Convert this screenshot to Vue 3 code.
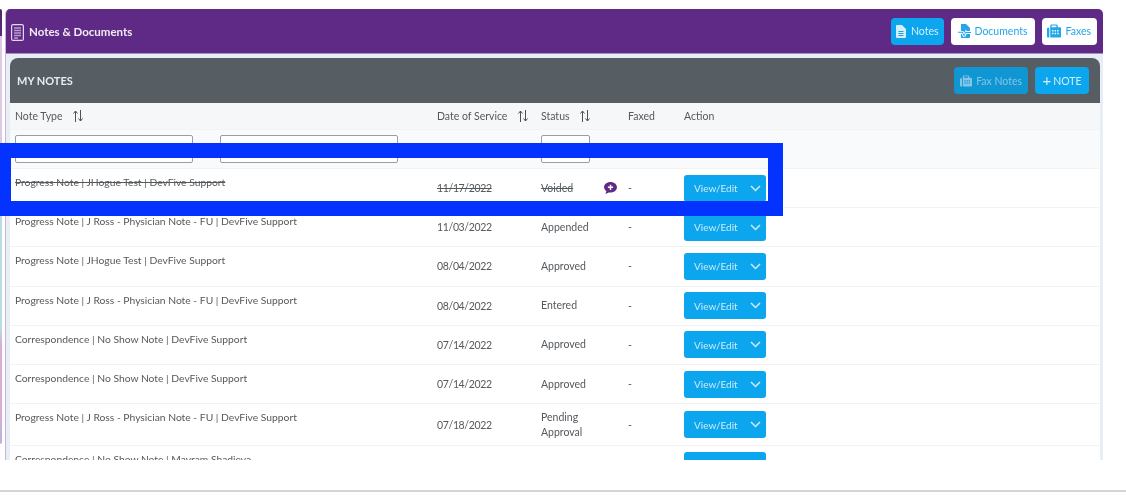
<template>
  <div class="page">
    <div class="sidebar"></div>
    <section class="panel">
      <header class="panel__head">
        <div class="panel__title">
          <svg class="doc" width="13" height="17" viewBox="0 0 13 17" fill="none" stroke="#e3d6ee" stroke-width="1.2">
            <rect x="0.6" y="0.6" width="11.8" height="15.8" rx="1.5" />
            <path d="M3 4h7M3 6.500h7M3 9h7M3 11.500h7M3 14h4" stroke="#b79ccd" stroke-width="1.300" />
          </svg>
          <span>Notes &amp; Documents</span>
        </div>
        <div class="tabs">
          <button class="tab tab--active">
            <svg width="10" height="13" viewBox="0 0 10 13"><path fill="currentColor" fill-rule="evenodd" d="M1 0h5l4 4v8a1 1 0 0 1-1 1H1a1 1 0 0 1-1-1V1a1 1 0 0 1 1-1zm1.500 6v1h5V6zm0 2v1h5V8zm0 2v1h5v-1z"/></svg>
            Notes
          </button>
          <button class="tab tab--docs">
            <svg width="13" height="14" viewBox="0 0 13 14"><path fill="currentColor" d="M3 0h5l4 4v3H8.500L7.800 5.500 6.200 9 5.300 7H3zM0 7.700h4.800l1.400 3 1.600-3.400.4.700H13v1H8l-.2-.2L6.200 13 4.300 8.700H0zM3 10h.7l1.500 3h2l1.400-3H12v3a1 1 0 0 1-1 1H4a1 1 0 0 1-1-1z"/></svg>
            Documents
          </button>
          <button class="tab">
            <svg width="14" height="14" viewBox="0 0 15 14"><path fill="currentColor" fill-rule="evenodd" d="M0 4.500a1 1 0 0 1 1-1h1.500V14H1a1 1 0 0 1-1-1zM3.500 3V1.500A1.500 1.500 0 0 1 5 0h5a1.500 1.500 0 0 1 1.500 1.500V3H14a1 1 0 0 1 1 1v9a1 1 0 0 1-1 1H3.500zm1.500 0h5V1.200H5zM5.500 6v1.500H7V6zm2.700 0v1.500h1.500V6zm2.700 0v1.500h1.500V6zM5.500 9v1.500H7V9zm2.700 0v1.500h1.500V9zm2.700 0v1.500h1.500V9z"/></svg>
            Faxes
          </button>
        </div>
      </header>

      <div class="panel__body">
        <div class="card">
          <div class="card__head">
            <h2>MY NOTES</h2>
            <div class="card__actions">
              <button class="action action--muted">
                <svg width="12" height="12" viewBox="0 0 15 14"><path fill="currentColor" fill-rule="evenodd" d="M0 4.500a1 1 0 0 1 1-1h1.500V14H1a1 1 0 0 1-1-1zM3.500 3V1.500A1.500 1.500 0 0 1 5 0h5a1.500 1.500 0 0 1 1.500 1.500V3H14a1 1 0 0 1 1 1v9a1 1 0 0 1-1 1H3.500zm1.500 0h5V1.200H5zM5.500 6v1.500H7V6zm2.700 0v1.500h1.500V6zm2.700 0v1.500h1.500V6zM5.500 9v1.500H7V9zm2.700 0v1.500h1.500V9zm2.700 0v1.500h1.500V9z"/></svg>
                Fax Notes
              </button>
              <button class="action action--add"><span class="plus">+</span>NOTE</button>
            </div>
          </div>

          <div class="row row--head">
            <div class="cell">Note Type <svg class="sort" width="12" height="12" viewBox="0 0 12 12" fill="none" stroke="currentColor"><path d="M3.500 12V1M1.500 3.500 3.500 1l2 2.500M8.500 0v11M6.500 8.500l2 2.500 2-2.500" /></svg></div>
            <div class="cell">Date of Service <svg class="sort" width="12" height="12" viewBox="0 0 12 12" fill="none" stroke="currentColor"><path d="M3.500 12V1M1.500 3.500 3.500 1l2 2.500M8.500 0v11M6.500 8.500l2 2.500 2-2.500" /></svg></div>
            <div class="cell">Status <svg class="sort" width="12" height="12" viewBox="0 0 12 12" fill="none" stroke="currentColor"><path d="M3.500 12V1M1.500 3.500 3.500 1l2 2.500M8.500 0v11M6.500 8.500l2 2.500 2-2.500" /></svg></div>
            <div class="cell">Faxed</div>
            <div class="cell">Action</div>
          </div>

          <div class="row row--filter">
            <div class="filters">
              <input class="filter" type="text" />
              <input class="filter" type="text" />
            </div>
            <div></div>
            <div><input class="filter filter--small" type="text" /></div>
          </div>

          <div v-for="(note, i) in notes" :key="i" class="row row--note" :class="{ 'row--voided': note.status === 'Voided', 'row--tall': note.tall }">
            <div class="cell cell--type">{{ note.type }}</div>
            <div class="cell cell--date">{{ note.date }}</div>
            <div class="cell cell--status">
              <span class="status">{{ note.status }}</span>
              <svg v-if="note.status === 'Voided'" class="bubble" width="13" height="12" viewBox="0 0 14 13">
                <path fill="#5f2a86" d="M7 0c3.900 0 7 2.500 7 5.800s-3.100 5.700-7 5.700c-.7 0-1.300 0-1.900-.2L1.500 13l1-3.100C1 8.900 0 7.400 0 5.800 0 2.500 3.100 0 7 0z" />
                <path stroke="#fff" stroke-width="1.600" d="M4.200 5.800h5.600M7 3v5.600" />
              </svg>
            </div>
            <div class="cell cell--faxed">{{ note.date ? '-' : '' }}</div>
            <div class="cell cell--action">
              <button class="view">
                <span>View/Edit</span>
                <svg width="11" height="7" viewBox="0 0 11 7" fill="none" stroke="currentColor" stroke-width="1.500"><path d="M1 1l4.500 4.500L10 1" /></svg>
              </button>
            </div>
          </div>
        </div>
      </div>
    </section>
    <div class="highlight"></div>
    <div class="rule"></div>
  </div>
</template>

<script setup>
const notes = [
  { type: 'Progress Note | JHogue Test | DevFive Support', date: '11/17/2022', status: 'Voided' },
  { type: 'Progress Note | J Ross - Physician Note - FU | DevFive Support', date: '11/03/2022', status: 'Appended' },
  { type: 'Progress Note | JHogue Test | DevFive Support', date: '08/04/2022', status: 'Approved' },
  { type: 'Progress Note | J Ross - Physician Note - FU | DevFive Support', date: '08/04/2022', status: 'Entered' },
  { type: 'Correspondence | No Show Note | DevFive Support', date: '07/14/2022', status: 'Approved' },
  { type: 'Correspondence | No Show Note | DevFive Support', date: '07/14/2022', status: 'Approved' },
  { type: 'Progress Note | J Ross - Physician Note - FU | DevFive Support', date: '07/18/2022', status: 'Pending Approval', tall: true },
  { type: 'Correspondence | No Show Note | Mayram Shadieva', date: '', status: '' }
]
</script>

<style>
html,
body {
  margin: 0;
  background: #fff;
  overflow: hidden;
}
</style>

<style scoped>
.page {
  position: relative;
  width: 1126px;
  height: 502px;
  overflow: hidden;
  background: #fff;
  font-family: Lato, "Open Sans", sans-serif;
  color: #54595d;
  display: flex;
  padding-top: 9px;
  box-sizing: border-box;
  gap: 3px;
  align-items: flex-start;
}

.sidebar {
  width: 2px;
  height: 435px;
  background: linear-gradient(#4a2b66 0, #5f2a86 27px, #dcc9e4 27px, #dcc9e4 190px, #b9dbe2 200px, #b9dbe2 320px, #d9aed6 335px, #d9aed6 410px, #c4b0e0 420px);
  border-radius: 0 3px 3px 0;
  filter: blur(0.4px);
}

.panel {
  width: 1098px;
  height: 451px;
  overflow: hidden;
  border-radius: 5px 5px 0 0;
  background: #e8eef5;
  border-left: 1px solid #c9b3d8;
  box-sizing: border-box;
  flex: none;
  filter: blur(0.4px);
}

.panel__head {
  height: 44px;
  background: #5f2a86;
  display: flex;
  align-items: center;
  justify-content: space-between;
  padding: 0 6px 0 5px;
  border-bottom: 1px solid #a98cc0;
}

.panel__title {
  display: flex;
  align-items: center;
  gap: 5px;
  color: #f0eaf5;
  font-size: 11.5px;
  font-weight: 700;
}

.doc {
  margin-top: 3px;
}

.tabs {
  display: flex;
  gap: 7px;
}

.tab {
  height: 27px;
  display: flex;
  align-items: center;
  gap: 5px;
  padding: 0 6px 0 5px;
  background: #fff;
  color: #22a6ea;
  border: none;
  border-radius: 4px;
  font: 400 10.5px Lato, sans-serif;
}

.tab--active {
  background: #0ba6ee;
  color: #d6eefb;
}

.tab--docs {
  gap: 3px;
  padding: 0 7px;
}

.panel__body {
  padding: 4px 3px 0 4px;
}

.card {
  background: #fff;
  border-radius: 8px 8px 0 0;
  overflow: hidden;
}

.card__head {
  height: 45px;
  background: #575e63;
  display: flex;
  align-items: center;
  justify-content: space-between;
  padding: 0 11px 0 7px;
}

.card__head h2 {
  margin: 0;
  color: #e9ecee;
  font-size: 11px;
  font-weight: 700;
}

.card__actions {
  display: flex;
  gap: 7px;
}

.action {
  height: 27px;
  display: flex;
  align-items: center;
  padding: 0;
  background: #0ba6ee;
  color: #d6eefb;
  border: none;
  border-radius: 4px;
  font: 400 10.5px Lato, sans-serif;
}

.action--muted {
  gap: 4px;
  padding: 0 6px;
  background: #1096d2;
  color: #83c6e6;
}

.action--add {
  width: 54px;
  justify-content: center;
  gap: 2px;
}

.plus {
  font-size: 15px;
  line-height: 1;
}

.row {
  display: grid;
  grid-template-columns: 422px 104px 87px 56px 1fr;
  padding-left: 5px;
  align-items: center;
  font-size: 10.5px;
  border-bottom: 1px solid #f1f3f5;
}

.row--head {
  height: 27px;
  background: #f6f7f9;
  box-sizing: border-box;
}

.sort {
  margin-left: 7px;
  vertical-align: -2px;
  color: #4c5155;
}

.row--filter {
  height: 39px;
  box-sizing: border-box;
  background: #f9fafb;
  align-items: start;
  padding-top: 5px;
}

.filters {
  display: flex;
  gap: 27px;
}

.filter {
  width: 178px;
  height: 28px;
  margin: 0;
  padding: 0;
  box-sizing: border-box;
  background: #fff;
  border: 1px solid #9a9ea2;
  border-radius: 2px;
}

.filter--small {
  width: 49px;
}

.row--note {
  height: 39.2px;
  box-sizing: border-box;
  background: #fff;
}

.row--tall {
  height: 42px;
}

.cell--type {
  align-self: start;
  padding-top: 7px;
  font-size: 10.3px;
}

.cell--date {
  letter-spacing: -0.35px;
}

.row--voided .cell--type,
.row--voided .cell--date,
.row--voided .status {
  text-decoration: line-through;
}

.cell--status {
  display: flex;
  align-items: center;
  justify-content: space-between;
  line-height: 15px;
  padding-right: 11px;
}

.view {
  width: 82px;
  height: 27px;
  display: flex;
  align-items: center;
  justify-content: space-between;
  padding: 0 5px 0 10px;
  background: #0ba6ee;
  color: #cfeafa;
  border: none;
  border-radius: 3px;
  box-sizing: border-box;
  font: 400 10px Lato, sans-serif;
}

.highlight {
  position: absolute;
  left: -4px;
  top: 143px;
  width: 787px;
  height: 73px;
  box-sizing: border-box;
  border: 15px solid #0433ff;
}

.rule {
  position: absolute;
  left: 0;
  right: 0;
  top: 490px;
  height: 2px;
  background: #d2d6d9;
}
</style>
